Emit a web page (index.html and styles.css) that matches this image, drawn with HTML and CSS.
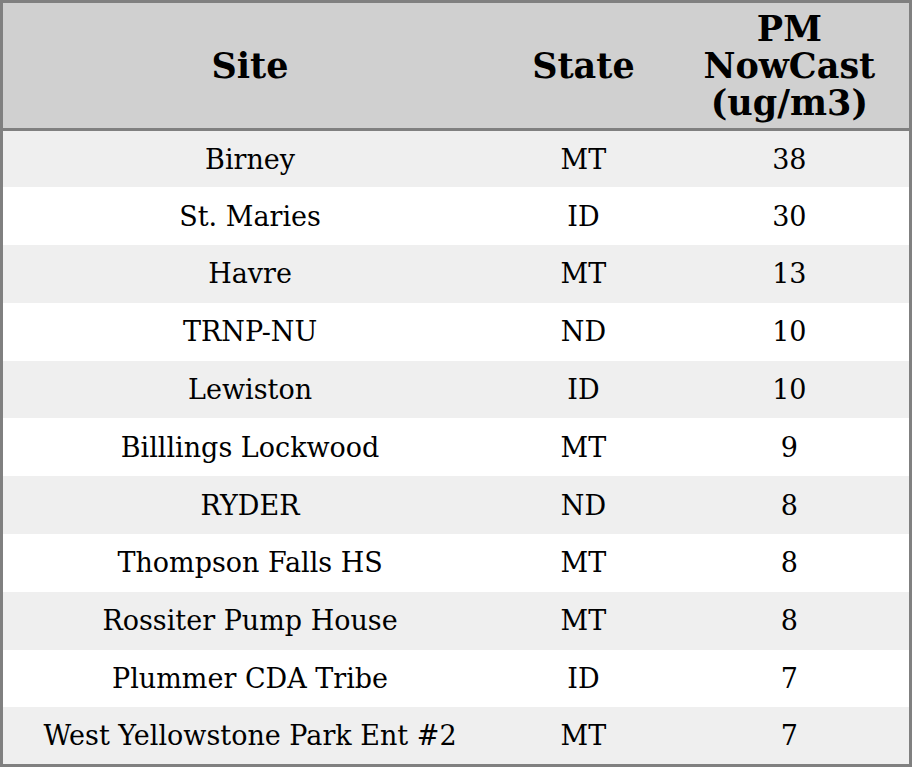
FILE: index.html
```html
<!DOCTYPE html>
<html>
<head>
<meta charset="utf-8">
<link rel="stylesheet" href="styles.css">
</head>
<body>
<table class="aq">
  <thead>
    <tr><th class="c-site">Site</th><th class="c-state">State</th><th class="c-pm">PM<br>NowCast<br>(ug/m3)</th></tr>
  </thead>
  <tbody>
    <tr><td>Birney</td><td>MT</td><td>38</td></tr>
    <tr><td>St. Maries</td><td>ID</td><td>30</td></tr>
    <tr><td>Havre</td><td>MT</td><td>13</td></tr>
    <tr><td>TRNP-NU</td><td>ND</td><td>10</td></tr>
    <tr><td>Lewiston</td><td>ID</td><td>10</td></tr>
    <tr><td>Billlings Lockwood</td><td>MT</td><td>9</td></tr>
    <tr><td>RYDER</td><td>ND</td><td>8</td></tr>
    <tr><td>Thompson Falls HS</td><td>MT</td><td>8</td></tr>
    <tr><td>Rossiter Pump House</td><td>MT</td><td>8</td></tr>
    <tr><td>Plummer CDA Tribe</td><td>ID</td><td>7</td></tr>
    <tr><td>West Yellowstone Park Ent #2</td><td>MT</td><td>7</td></tr>
  </tbody>
</table>
</body>
</html>
```
FILE: styles.css
```css
html, body {
  margin: 0;
  padding: 0;
  background: #ffffff;
}
.aq {
  width: 912px;
  border-collapse: collapse;
  border: 3px solid #808080;
  font-family: "DejaVu Serif", serif;
  color: #000;
  table-layout: fixed;
}
.aq th {
  background: #d0d0d0;
  font-size: 35px;
  line-height: 37px;
  font-weight: bold;
  text-align: center;
  height: 128px;
  padding: 0 10px;
  border-bottom: 3px solid #808080;
  box-sizing: border-box;
}
.c-site { width: 494px; }
.c-state { width: 172px; }
.c-pm { width: 240px; }
.aq td {
  font-size: 27px;
  text-align: center;
  height: 57.8px;
  padding: 0;
  box-sizing: border-box;
}
.aq tbody tr:nth-child(odd) td { background: #efefef; }
.aq tbody tr:nth-child(even) td { background: #ffffff; }
```
